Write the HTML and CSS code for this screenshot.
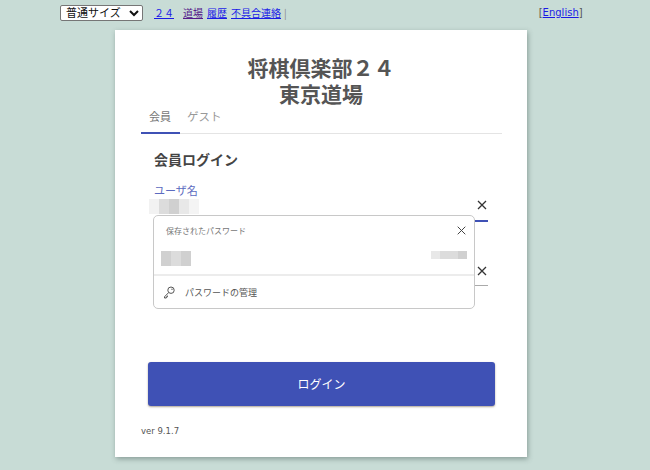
FILE: index.html
```html
<!DOCTYPE html>
<html lang="ja">
<head>
<meta charset="utf-8">
<title>将棋倶楽部24 東京道場</title>
<link rel="stylesheet" href="styles.css">
</head>
<body>
<header class="topbar">
  <select class="size-select"><option>普通サイズ</option></select>
  <a class="link home" href="#">２４</a>
  <nav class="links">
    <a class="link visited" href="#">道場</a>
    <a class="link" href="#">履歴</a>
    <a class="link" href="#">不具合連絡</a>
    <span class="sep">|</span>
  </nav>
  <span class="lang">[<a class="link" href="#">English</a>]</span>
</header>
<main class="card">
  <h1 class="title">将棋倶楽部２４<br>東京道場</h1>
  <div class="tabs">
    <span class="tab active">会員</span>
    <span class="tab">ゲスト</span>
  </div>
  <section class="form">
    <h2 class="form-title">会員ログイン</h2>
    <div class="field user">
      <label class="label">ユーザ名</label>
      <div class="control active-control">
        <span class="blur blur-user"><i class="c1"></i><i class="c2"></i><i class="c3"></i><i class="c4"></i><i class="c5"></i></span>
        <span class="clear">
          <svg width="10" height="10" viewBox="0 0 10 10"><path d="M1 1L9 9M9 1L1 9" stroke="#333" stroke-width="1.3" fill="none"/></svg>
        </span>
      </div>
    </div>
    <div class="field pass">
      <div class="control">
        <span class="clear">
          <svg width="10" height="10" viewBox="0 0 10 10"><path d="M1 1L9 9M9 1L1 9" stroke="#333" stroke-width="1.3" fill="none"/></svg>
        </span>
      </div>
    </div>
    <div class="popup">
      <div class="popup-head">
        <span class="popup-title">保存されたパスワード</span>
        <svg width="9" height="9" viewBox="0 0 9 9"><path d="M.7.7L8.3 8.3M8.3.7L.7 8.3" stroke="#444" stroke-width="1" fill="none"/></svg>
      </div>
      <div class="popup-row">
        <span class="blur blur-name"><i class="c3"></i><i class="c2"></i><i class="c3"></i></span>
        <span class="blur blur-pass"><i class="c4"></i><i class="c2"></i><i class="c2"></i><i class="c3"></i></span>
      </div>
      <div class="popup-foot">
        <svg width="12" height="13" viewBox="0 0 12 13"><circle cx="8" cy="4.2" r="3.2" fill="none" stroke="#555" stroke-width="1"/><circle cx="9" cy="3.2" r=".7" fill="#555"/><path d="M5.6 6.6L1.5 10.8V12h1.8v-1.2h1.2V9.6" fill="none" stroke="#555" stroke-width="1"/></svg>
        <span class="popup-manage">パスワードの管理</span>
      </div>
    </div>
  </section>
  <button class="login" type="button">ログイン</button>
  <p class="version">ver 9.1.7</p>
</main>
</body>
</html>
```
FILE: styles.css
```css
* { box-sizing: border-box; }
html, body { margin: 0; height: 100%; }
body {
  background: #c8dcd6;
  font-family: "Noto Sans CJK JP", "DejaVu Sans", sans-serif;
  overflow: hidden;
}
.topbar {
  display: flex;
  align-items: center;
  height: 30px;
  padding: 0 0 5px 60px;
  font-size: 10px;
  color: #555;
}
.size-select {
  width: 83px;
  height: 16px;
  padding: 0 0 0 1px;
  font: 11px/14px "Liberation Sans", "Noto Sans CJK JP", sans-serif;
  background: #fff;
  border: 1px solid #767676;
  border-radius: 2px;
  color: #111;
}
.link { color: #1a1ae6; text-decoration: underline; }
.visited { color: #551a8b; }
.home { margin-left: 11px; }
.links { display: flex; gap: 4px; margin-left: 9px; }
.sep { color: #888; margin-left: -1px; }
.lang { margin-left: 252px; font-family: "DejaVu Sans", sans-serif; font-size: 10px; }
.card {
  position: relative;
  width: 412px;
  height: 427px;
  margin-left: 115px;
  padding-top: 24px;
  background: #fff;
  box-shadow: 1px 2px 5px rgba(60, 80, 75, .45);
}
.title {
  margin: 0;
  font-size: 21px;
  line-height: 26px;
  font-weight: 700;
  text-align: center;
  color: #555;
}
.tabs {
  display: flex;
  margin: 0 25px 0 26px;
  height: 28px;
  border-bottom: 1px solid #e4e4e4;
}
.tab {
  height: 28px;
  padding: 0 8px 0 7px;
  font-size: 11.5px;
  line-height: 21px;
  color: #999;
}
.tab.active {
  width: 39px;
  padding-left: 8px;
  font-size: 11px;
  color: #777;
  border-bottom: 2px solid #3f51b5;
}
.form {
  position: relative;
  height: 228px;
  padding: 15px 39px 0 38px;
}
.form-title {
  margin: 0 0 14px 1px;
  font-size: 14px;
  line-height: 20px;
  font-weight: 700;
  color: #444;
}
.label {
  display: block;
  margin-left: 1px;
  font-size: 11px;
  line-height: 14px;
  color: #5c6bc0;
}
.control {
  position: relative;
  display: flex;
  justify-content: flex-end;
  align-items: center;
  height: 22px;
  padding: 0 1px 8px 0;
  border-bottom: 1px solid #aaa;
}
.active-control { border-bottom: 2px solid #3f51b5; height: 25px; padding-bottom: 7px; }
.pass { margin-top: 42px; }
.blur { display: flex; }
.blur i { display: block; width: 10px; height: 100%; }
.c1 { background: #f2f2f2; }
.c2 { background: #dcdcdc; }
.c3 { background: #d0d0d0; }
.c4 { background: #e8e8e8; }
.c5 { background: #f4f4f4; }
.blur-user {
  position: absolute;
  left: -4px;
  top: 2px;
  height: 15px;
}
.clear { display: flex; }
.popup {
  position: absolute;
  left: 38px;
  top: 81px;
  width: 322px;
  height: 94px;
  display: flex;
  flex-direction: column;
  background: #fff;
  border: 1px solid #c8c8c8;
  border-radius: 5px;
}
.popup-head {
  display: flex;
  justify-content: space-between;
  align-items: center;
  height: 29px;
  padding: 0 8px 0 12px;
}
.popup-title { font-size: 8px; color: #777; }
.popup-row {
  display: flex;
  justify-content: space-between;
  align-items: flex-start;
  height: 31px;
  padding: 6px 7px 0 8px;
  border-bottom: 2px solid #ececec;
}
.blur-name { height: 15px; margin-left: -1px; }
.blur-pass { height: 8px; }
.blur-pass i { width: 9px; }
.popup-foot {
  display: flex;
  align-items: center;
  gap: 10px;
  flex: 1;
  padding: 1px 0 0 9px;
}
.popup-manage { font-size: 9px; color: #555; }
.login {
  position: absolute;
  left: 33px;
  top: 332px;
  display: block;
  width: 347px;
  height: 44px;
  padding: 0 0 2px;
  background: #3f51b5;
  border: 0;
  border-radius: 3px;
  color: #fff;
  font: 400 12px "Noto Sans CJK JP", sans-serif;
  box-shadow: 0 1px 2px rgba(110, 90, 60, .55);
}
.version {
  position: absolute;
  left: 26px;
  top: 395px;
  margin: 0;
  font: 8.5px/12px "DejaVu Sans", sans-serif;
  color: #555;
}
```
